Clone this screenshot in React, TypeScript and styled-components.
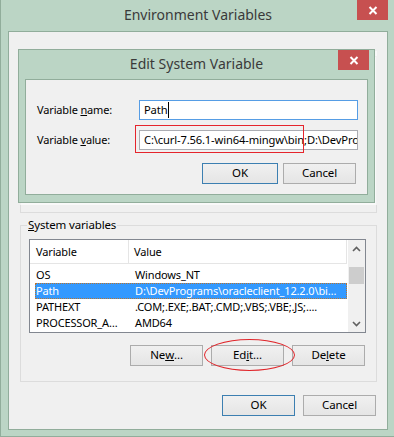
import React from "react";
import styled, { createGlobalStyle } from "styled-components";

const GlobalStyle = createGlobalStyle`
  html, body {
    margin: 0;
    padding: 0;
    background: #ffffff;
  }
  body {
    font-family: "Noto Sans", "Liberation Sans", sans-serif;
    font-size: 11px;
    letter-spacing: -0.15px;
    color: #000000;
  }
`;

const FRAME = "#bbd5c5";
const FRAME_LINE = "#91ad9b";
const FACE = "#f0f0f0";

// ---------- window chrome ----------

const OuterWindow = styled.div`
  position: relative;
  box-sizing: border-box;
  width: 394px;
  height: 437px;
  background: ${FRAME};
  border-left: 1px solid ${FRAME_LINE};
  border-bottom: 1px solid ${FRAME_LINE};
  padding: 0 6px 6px 7px;
  display: flex;
  flex-direction: column;
`;

const DialogWindow = styled.div`
  position: absolute;
  left: 17px;
  top: 49px;
  box-sizing: border-box;
  width: 357px;
  height: 154px;
  background: ${FRAME};
  border: 1px solid ${FRAME_LINE};
  padding: 0 6px 7px 6px;
  display: flex;
  flex-direction: column;
  box-shadow: 2px 2px 0 rgba(255, 255, 255, 0.6);
`;

const TitleBar = styled.div<{ $height: number }>`
  height: ${({ $height }) => $height}px;
  display: grid;
  grid-template-columns: 1fr auto 1fr;
  align-items: start;
  flex-shrink: 0;
`;

const TitleText = styled.div<{ $top: number }>`
  grid-column: 2;
  padding-top: ${({ $top }) => $top}px;
  font-size: 14px;
  letter-spacing: 0;
  line-height: 20px;
  color: #3a3a3a;
  white-space: nowrap;
`;

const CloseButton = styled.div<{ $right: number }>`
  grid-column: 3;
  justify-self: end;
  margin-right: ${({ $right }) => $right}px;
  width: 31px;
  height: 20px;
  background: #c75050;
  display: flex;
  align-items: center;
  justify-content: center;
`;

const Client = styled.div`
  position: relative;
  flex: 1;
  background: ${FACE};
  border: 1px solid ${FRAME_LINE};
  display: flex;
  flex-direction: column;
`;

const CloseGlyph = () => (
  <svg width="10" height="9" viewBox="0 0 10 9">
    <path d="M1.5 1 L8.5 8 M8.5 1 L1.5 8" stroke="#ffffff" strokeWidth="2" />
  </svg>
);

// ---------- controls ----------

const Button = styled.div<{ $width: number; $default?: boolean }>`
  box-sizing: border-box;
  width: ${({ $width }) => $width}px;
  height: 21px;
  border: 1px solid ${({ $default }) => ($default ? "#3c7fb1" : "#acacac")};
  background: linear-gradient(#f0f0f0, #e5e5e5);
  display: flex;
  align-items: center;
  justify-content: center;
  font-size: 11.5px;
  line-height: 16px;
  padding-bottom: 1px;
`;

const ButtonRow = styled.div<{ $gap: number; $top: number; $right: number }>`
  display: flex;
  justify-content: flex-end;
  gap: ${({ $gap }) => $gap}px;
  margin-top: ${({ $top }) => $top}px;
  margin-right: ${({ $right }) => $right}px;
`;

const Annotated = styled.div`
  position: relative;
`;

const RedBox = styled.div`
  position: absolute;
  left: -4px;
  top: -5px;
  width: 169px;
  height: 28px;
  box-sizing: border-box;
  border: 1px solid #e5252c;
  pointer-events: none;
`;

const RedEllipse = styled.div`
  position: absolute;
  left: -7px;
  top: -6px;
  width: 91px;
  height: 32px;
  box-sizing: border-box;
  border: 1px solid #e0262b;
  border-radius: 50%;
  pointer-events: none;
`;

// ---------- edit dialog ----------

const FormGrid = styled.div`
  display: grid;
  grid-template-columns: 102px 219px;
  row-gap: 10px;
  margin: 20px 0 0 11px;
  align-items: center;
`;

const FieldLabel = styled.label`
  white-space: nowrap;
  line-height: 16px;
`;

const TextBox = styled.div<{ $focused?: boolean }>`
  box-sizing: border-box;
  height: 20px;
  border: 1px solid ${({ $focused }) => ($focused ? "#569de5" : "#abadb3")};
  background: #ffffff;
  padding: 0 4px;
  font-size: 11.2px;
  line-height: 18px;
  white-space: nowrap;
  overflow: hidden;
  display: flex;
  align-items: center;
`;

const Caret = styled.span`
  display: inline-block;
  width: 1px;
  height: 16px;
  background: #000000;
  margin-left: 1px;
`;

// ---------- main dialog ----------

const GroupBox = styled.div<{ $top: number; $height: number }>`
  box-sizing: border-box;
  margin: ${({ $top }) => $top}px 10px 0 11px;
  height: ${({ $height }) => $height}px;
  border: 1px solid #dcdcdc;
`;

const FieldSet = styled.fieldset<{ $top: number }>`
  box-sizing: border-box;
  margin: ${({ $top }) => $top}px 10px 0 11px;
  height: 165px;
  border: 1px solid #dcdcdc;
  padding: 0 11px 0 8px;
  min-width: 0;
  display: flex;
  flex-direction: column;
`;

const Legend = styled.legend`
  margin-left: -2px;
  padding: 0 1px;
  font-size: 11.5px;
  line-height: 16px;
`;

const ListView = styled.div`
  box-sizing: border-box;
  margin-top: 6px;
  width: 337px;
  height: 94px;
  border: 1px solid #828790;
  background: #ffffff;
  display: flex;
`;

const ListBody = styled.div`
  flex: 1;
  display: flex;
  flex-direction: column;
`;

const HeaderRow = styled.div`
  box-sizing: border-box;
  height: 24px;
  display: grid;
  grid-template-columns: 99px 1fr;
  border-bottom: 1px solid #e5e5e5;
  border-right: 1px solid #e5e5e5;
  margin-right: 1px;
`;

const HeaderCell = styled.div<{ $first?: boolean }>`
  padding-left: ${({ $first }) => ($first ? 6 : 5)}px;
  display: flex;
  align-items: center;
  border-right: ${({ $first }) => ($first ? "1px solid #e5e5e5" : "none")};
`;

const Rows = styled.div`
  padding-top: 3px;
`;

const Row = styled.div<{ $selected?: boolean }>`
  box-sizing: border-box;
  height: 16px;
  margin-left: 5px;
  width: 312px;
  display: grid;
  grid-template-columns: 94px 1fr;
  align-items: center;
  background: ${({ $selected }) => ($selected ? "#3399ff" : "transparent")};
  color: ${({ $selected }) => ($selected ? "#ffffff" : "#000000")};
  outline: ${({ $selected }) => ($selected ? "1px dotted #b87430" : "none")};
  outline-offset: -1px;
  line-height: 16px;
  white-space: nowrap;
`;

const Cell = styled.div<{ $first?: boolean }>`
  padding-left: ${({ $first }) => ($first ? 1 : 6)}px;
  overflow: hidden;
`;

const ScrollBar = styled.div`
  width: 17px;
  background: #f0f0f0;
  display: flex;
  flex-direction: column;
  align-items: center;
`;

const ScrollArrow = styled.div`
  height: 17px;
  width: 17px;
  display: flex;
  align-items: center;
  justify-content: center;
`;

const ScrollThumb = styled.div`
  width: 15px;
  height: 17px;
  background: #cdcdcd;
  margin-top: 10px;
  flex-shrink: 0;
`;

const ScrollSpacer = styled.div`
  flex: 1;
`;

const Chevron = ({ up }: { up?: boolean }) => (
  <svg width="9" height="6" viewBox="0 0 9 6">
    <path
      d={up ? "M1 5 L4.5 1.5 L8 5" : "M1 1 L4.5 4.5 L8 1"}
      stroke="#606060"
      strokeWidth="1.6"
      fill="none"
    />
  </svg>
);

const systemVars = [
  { name: "OS", value: "Windows_NT" },
  { name: "Path", value: "D:\\DevPrograms\\oracleclient_12.2.0\\bi…", selected: true },
  { name: "PATHEXT", value: ".COM;.EXE;.BAT;.CMD;.VBS;.VBE;.JS;...." },
  { name: "PROCESSOR_A…", value: "AMD64" },
];

const App: React.FC = () => {
  return (
    <>
      <GlobalStyle />
      <OuterWindow>
        <TitleBar $height={31}>
          <TitleText $top={5}>Environment Variables</TitleText>
          <CloseButton $right={0}>
            <CloseGlyph />
          </CloseButton>
        </TitleBar>
        <Client>
          <GroupBox $top={24} $height={157} />
          <FieldSet $top={4}>
            <Legend>
              <u>S</u>ystem variables
            </Legend>
            <ListView>
              <ListBody>
                <HeaderRow>
                  <HeaderCell $first>Variable</HeaderCell>
                  <HeaderCell>Value</HeaderCell>
                </HeaderRow>
                <Rows>
                  {systemVars.map((v) => (
                    <Row key={v.name} $selected={v.selected}>
                      <Cell $first>{v.name}</Cell>
                      <Cell>{v.value}</Cell>
                    </Row>
                  ))}
                </Rows>
              </ListBody>
              <ScrollBar>
                <ScrollArrow>
                  <Chevron up />
                </ScrollArrow>
                <ScrollThumb />
                <ScrollSpacer />
                <ScrollArrow>
                  <Chevron />
                </ScrollArrow>
              </ScrollBar>
            </ListView>
            <ButtonRow $gap={8} $top={12} $right={0}>
              <Button $width={73}>
                Ne<u>w</u>...
              </Button>
              <Annotated>
                <Button $width={73}>
                  Ed<u>i</u>t...
                </Button>
                <RedEllipse />
              </Annotated>
              <Button $width={73}>
                De<u>l</u>ete
              </Button>
            </ButtonRow>
          </FieldSet>
          <ButtonRow $gap={8} $top={13} $right={11}>
            <Button $width={73} $default>
              OK
            </Button>
            <Button $width={73}>Cancel</Button>
          </ButtonRow>
        </Client>

        <DialogWindow>
          <TitleBar $height={29}>
            <TitleText $top={4}>Edit System Variable</TitleText>
            <CloseButton $right={-1}>
              <CloseGlyph />
            </CloseButton>
          </TitleBar>
          <Client>
            <FormGrid>
              <FieldLabel>
                Variable <u>n</u>ame:
              </FieldLabel>
              <TextBox $focused>
                Path
                <Caret />
              </TextBox>
              <FieldLabel>
                Variable <u>v</u>alue:
              </FieldLabel>
              <Annotated>
                <TextBox>C:\curl-7.56.1-win64-mingw\bin;D:\DevProg</TextBox>
                <RedBox />
              </Annotated>
            </FormGrid>
            <ButtonRow $gap={5} $top={13} $right={11}>
              <Button $width={76} $default>
                OK
              </Button>
              <Button $width={73}>Cancel</Button>
            </ButtonRow>
          </Client>
        </DialogWindow>
      </OuterWindow>
    </>
  );
};

export default App;
